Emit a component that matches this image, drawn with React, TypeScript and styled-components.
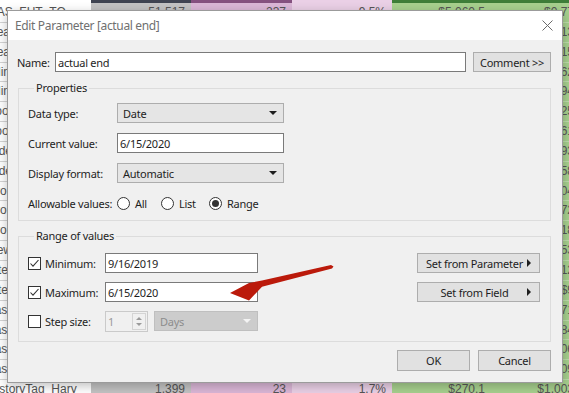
import React from "react";
import styled, { createGlobalStyle } from "styled-components";

const GlobalStyle = createGlobalStyle`
  html, body {
    margin: 0;
    padding: 0;
  }
  body {
    width: 569px;
    height: 393px;
    overflow: hidden;
    background: #ffffff;
  }
`;

const UI_FONT = `"Noto Sans", "Liberation Sans", sans-serif`;

type Tone = "plain" | "gray" | "pink" | "lightPink" | "green";

const toneBg: Record<Tone, string> = {
  plain: "#ffffff",
  gray: "#c3c3c3",
  pink: "#dbb7d7",
  lightPink: "#ead0e6",
  green: "#a7d08e",
};

const toneTop: Record<Tone, string> = {
  plain: "#ffffff",
  gray: "#3f4451",
  pink: "#85517f",
  lightPink: "#ead0e6",
  green: "#3e7d38",
};

const TONES: Tone[] = ["plain", "gray", "pink", "lightPink", "green", "green"];

const rows: string[][] = [
  ["NAS_FHT_TO", "51,517", "237", "9.5%", "$5,060.5", "$0.77"],
  ["Header_Ads", "2,114", "41", "1.9%", "$412.6", "$0.13"],
  ["Header_Lgo", "8,203", "66", "0.8%", "$1,230.2", "$2.15"],
  ["Inline_Ads", "3,011", "19", "0.6%", "$510.9", "$1.62"],
  ["Inline_Txt", "4,560", "88", "1.9%", "$733.0", "$0.94"],
  ["Footer_Ads", "1,902", "12", "0.6%", "$301.4", "$3.25"],
  ["Footer_Txt", "6,775", "105", "1.5%", "$820.8", "$0.61"],
  ["Side_Bnr_A", "2,840", "31", "1.1%", "$388.1", "$1.93"],
  ["Side_Bnr_B", "5,119", "47", "0.9%", "$640.7", "$0.58"],
  ["Promo_Tile", "3,390", "28", "0.8%", "$455.3", "$2.04"],
  ["Promo_Wide", "7,006", "90", "1.3%", "$902.5", "$0.72"],
  ["Promo_Tall", "1,244", "14", "1.1%", "$198.6", "$1.18"],
  ["Newsletter", "9,812", "130", "1.3%", "$1,402.0", "$0.53"],
  ["Inter_Ads", "2,506", "26", "1.0%", "$347.9", "$4.12"],
  ["Inter_Txt", "1,733", "18", "1.0%", "$260.4", "$9"],
  ["Last_List", "4,021", "52", "1.3%", "$598.2", "$0.71"],
  ["Last_Main", "3,655", "39", "1.1%", "$511.7", "$1.84"],
  ["Last_Side", "2,299", "21", "0.9%", "$344.0", "$0.06"],
  ["Last_Foot", "1,870", "17", "0.9%", "$289.3", "$3.09"],
  ["HistoryTag_Hary", "1,399", "23", "1.7%", "$270.1", "$1,003"],
];

// ---------- spreadsheet behind the dialog ----------

const Screen = styled.div`
  position: relative;
  width: 569px;
  height: 393px;
  overflow: hidden;
  background: #ffffff;
`;

const Sheet = styled.div`
  display: flex;
  flex-direction: column;
  width: 580px;
`;

const SheetRow = styled.div<{ $h: number }>`
  display: grid;
  grid-template-columns: 91px 100px 101px 100px 99px 89px;
  height: ${(p) => p.$h}px;
`;

const TopCell = styled.div<{ $tone: Tone }>`
  background: ${(p) => toneTop[p.$tone]};
`;

const Cell = styled.div<{ $tone: Tone }>`
  background: ${(p) => toneBg[p.$tone]};
  border-bottom: 1px solid
    ${(p) => (p.$tone === "plain" ? "#d4d4d4" : "rgba(255,255,255,0.25)")};
  box-sizing: border-box;
  font: 12px "Liberation Sans", Arial, sans-serif;
  color: #555555;
  line-height: 19px;
  white-space: nowrap;
  overflow: hidden;
  text-align: ${(p) => (p.$tone === "plain" ? "left" : "right")};
  text-indent: ${(p) => (p.$tone === "plain" ? "-12px" : "0")};
  padding: ${(p) => (p.$tone === "plain" ? "0" : "0 6px 0 0")};
`;

// ---------- dialog ----------

const Dialog = styled.div`
  position: absolute;
  left: 7px;
  top: 10px;
  width: 556px;
  height: 373px;
  box-sizing: border-box;
  display: flex;
  flex-direction: column;
  background: #f0f0f0;
  border: 1px solid #9b9b9b;
  box-shadow: 0 3px 10px rgba(0, 0, 0, 0.25);
  font-family: ${UI_FONT};
  font-size: 11px;
  letter-spacing: -0.25px;
  color: #1e1e1e;
`;

const TitleBar = styled.div`
  height: 29px;
  flex: none;
  display: flex;
  align-items: center;
  justify-content: space-between;
  background: #ffffff;
  padding: 0 9px 0 7px;
`;

const Title = styled.span`
  font-size: 12px;
  letter-spacing: -0.35px;
  color: #707070;
`;

const Body = styled.div`
  flex: 1;
  display: flex;
  flex-direction: column;
  padding: 12px 11px 0 8px;
`;

const NameRow = styled.div`
  display: flex;
  align-items: center;
  height: 20px;
`;

const NameLabel = styled.span`
  width: 38px;
  padding-left: 1px;
`;

const TextBox = styled.div<{ $w: number }>`
  width: ${(p) => p.$w}px;
  height: 20px;
  box-sizing: border-box;
  display: flex;
  align-items: center;
  padding-left: 2px;
  background: #ffffff;
  border: 1px solid #7a7a7a;
  white-space: nowrap;
`;

const Button = styled.button<{ $w: number; $h?: number }>`
  width: ${(p) => p.$w}px;
  height: ${(p) => p.$h ?? 20}px;
  box-sizing: border-box;
  display: flex;
  align-items: center;
  justify-content: center;
  padding: 0;
  background: #e1e1e1;
  border: 1px solid #adadad;
  border-radius: 0;
  font-family: ${UI_FONT};
  font-size: 11px;
  letter-spacing: -0.25px;
  color: #1e1e1e;
  white-space: nowrap;
`;

const Group = styled.fieldset<{ $top: number; $pad: string }>`
  margin: ${(p) => p.$top}px 0 0 2px;
  padding: ${(p) => p.$pad};
  border: 1px solid #dcdcdc;
  display: flex;
  flex-direction: column;
  gap: 10px;
  min-width: 0;
`;

const Legend = styled.legend`
  margin-left: 6px;
  padding: 0 2px;
  line-height: 16px;
`;

const FormRow = styled.div<{ $shift?: number }>`
  display: flex;
  align-items: center;
  height: 20px;
  margin-top: ${(p) => p.$shift ?? 0}px;
`;

const FieldLabel = styled.span<{ $w: number }>`
  width: ${(p) => p.$w}px;
  flex: none;
  white-space: nowrap;
`;

const Select = styled.div<{ $w: number; $disabled?: boolean }>`
  width: ${(p) => p.$w}px;
  height: 20px;
  box-sizing: border-box;
  display: flex;
  align-items: center;
  justify-content: space-between;
  padding: 0 6px 0 5px;
  background: ${(p) => (p.$disabled ? "#cccccc" : "#e5e5e5")};
  border: 1px solid ${(p) => (p.$disabled ? "#bfbfbf" : "#adadad")};
  color: ${(p) => (p.$disabled ? "#8d8d8d" : "#1e1e1e")};
`;

const DownArrow = styled.span<{ $color: string }>`
  width: 0;
  height: 0;
  border-left: 4px solid transparent;
  border-right: 4px solid transparent;
  border-top: 4px solid ${(p) => p.$color};
`;

const RightArrow = styled.span`
  width: 0;
  height: 0;
  flex: none;
  border-top: 4px solid transparent;
  border-bottom: 4px solid transparent;
  border-left: 4px solid #1e1e1e;
`;

const RadioOption = styled.label<{ $w?: number }>`
  display: flex;
  align-items: center;
  gap: 5px;
  width: ${(p) => (p.$w ? `${p.$w}px` : "auto")};
  flex: none;
`;

const RadioCircle = styled.span<{ $on?: boolean }>`
  width: 13px;
  height: 13px;
  box-sizing: border-box;
  border-radius: 50%;
  border: 1px solid #333333;
  background: #ffffff;
  display: flex;
  align-items: center;
  justify-content: center;
  &::after {
    content: "";
    display: ${(p) => (p.$on ? "block" : "none")};
    width: 7px;
    height: 7px;
    border-radius: 50%;
    background: #333333;
  }
`;

const CheckBox = styled.span`
  width: 13px;
  height: 13px;
  box-sizing: border-box;
  flex: none;
  border: 1px solid #333333;
  background: #ffffff;
  margin-right: 4px;
  display: flex;
`;

const SideButton = styled(Button)`
  margin-left: auto;
  padding: 0 8px 0 4px;
  justify-content: space-between;
`;

const SideText = styled.span`
  flex: 1;
  text-align: center;
`;

const Spinner = styled.div`
  width: 43px;
  height: 21px;
  box-sizing: border-box;
  display: flex;
  align-items: center;
  margin-right: 6px;
  border: 1px solid #cacaca;
  background: #f0f0f0;
  color: #9a9a9a;
`;

const SpinValue = styled.span`
  flex: 1;
  padding-left: 2px;
`;

const SpinArrows = styled.span`
  width: 14px;
  height: 17px;
  margin-right: 1px;
  box-sizing: border-box;
  border: 1px solid #d4d4d4;
  display: flex;
  flex-direction: column;
  align-items: center;
  justify-content: space-evenly;
`;

const SpinTri = styled.span<{ $up?: boolean }>`
  width: 0;
  height: 0;
  border-left: 3px solid transparent;
  border-right: 3px solid transparent;
  ${(p) =>
    p.$up ? "border-bottom: 3px solid #9a9a9a;" : "border-top: 3px solid #9a9a9a;"}
`;

const Footer = styled.div`
  display: flex;
  justify-content: flex-end;
  gap: 8px;
  margin-top: 8px;
`;

const Overlay = styled.svg`
  position: absolute;
  left: 0;
  top: 0;
  pointer-events: none;
`;

const Check = () => (
  <svg width="11" height="11" viewBox="0 0 11 11">
    <polyline points="1.5,5.5 4,8.2 9.5,2" fill="none" stroke="#333" strokeWidth="1.1" />
  </svg>
);

const CloseIcon = () => (
  <svg width="11" height="11" viewBox="0 0 11 11">
    <path d="M0.5 0.5 L10.5 10.5 M10.5 0.5 L0.5 10.5" stroke="#6a6a6a" strokeWidth="1" />
  </svg>
);

const App = () => {
  return (
    <Screen>
      <GlobalStyle />
      <Sheet>
        <SheetRow $h={3}>
          {TONES.map((t, i) => (
            <TopCell key={i} $tone={t} />
          ))}
        </SheetRow>
        {rows.map((r, ri) => (
          <SheetRow key={ri} $h={19.85}>
            {r.map((v, ci) => (
              <Cell key={ci} $tone={TONES[ci]}>
                {v}
              </Cell>
            ))}
          </SheetRow>
        ))}
      </Sheet>

      <Dialog>
        <TitleBar>
          <Title>Edit Parameter [actual end]</Title>
          <CloseIcon />
        </TitleBar>
        <Body>
          <NameRow>
            <NameLabel>Name:</NameLabel>
            <TextBox $w={411}>actual end</TextBox>
            <Button $w={78} style={{ marginLeft: 7 }}>
              Comment &gt;&gt;
            </Button>
          </NameRow>

          <Group $top={8} $pad="7px 10px 7px 9px">
            <Legend>Properties</Legend>
            <FormRow>
              <FieldLabel $w={89}>Data type:</FieldLabel>
              <Select $w={167}>
                Date
                <DownArrow $color="#1e1e1e" />
              </Select>
            </FormRow>
            <FormRow>
              <FieldLabel $w={89}>Current value:</FieldLabel>
              <TextBox $w={167}>6/15/2020</TextBox>
            </FormRow>
            <FormRow>
              <FieldLabel $w={89}>Display format:</FieldLabel>
              <Select $w={167}>
                Automatic
                <DownArrow $color="#1e1e1e" />
              </Select>
            </FormRow>
            <FormRow>
              <FieldLabel $w={89}>Allowable values:</FieldLabel>
              <RadioOption $w={44}>
                <RadioCircle />
                All
              </RadioOption>
              <RadioOption $w={48}>
                <RadioCircle />
                List
              </RadioOption>
              <RadioOption>
                <RadioCircle $on />
                Range
              </RadioOption>
            </FormRow>
          </Group>

          <Group $top={7} $pad="9px 10px 10px 9px">
            <Legend>Range of values</Legend>
            <FormRow>
              <CheckBox>
                <Check />
              </CheckBox>
              <FieldLabel $w={60}>Minimum:</FieldLabel>
              <TextBox $w={153}>9/16/2019</TextBox>
              <SideButton $w={123}>
                <SideText>Set from Parameter</SideText>
                <RightArrow />
              </SideButton>
            </FormRow>
            <FormRow $shift={-1}>
              <CheckBox>
                <Check />
              </CheckBox>
              <FieldLabel $w={60}>Maximum:</FieldLabel>
              <TextBox $w={153}>6/15/2020</TextBox>
              <SideButton $w={123}>
                <SideText>Set from Field</SideText>
                <RightArrow />
              </SideButton>
            </FormRow>
            <FormRow $shift={-1}>
              <CheckBox />
              <FieldLabel $w={60}>Step size:</FieldLabel>
              <Spinner>
                <SpinValue>1</SpinValue>
                <SpinArrows>
                  <SpinTri $up />
                  <SpinTri />
                </SpinArrows>
              </Spinner>
              <Select $w={104} $disabled>
                Days
                <DownArrow $color="#f4f4f4" />
              </Select>
            </FormRow>
          </Group>

          <Footer>
            <Button $w={73} $h={21}>
              OK
            </Button>
            <Button $w={73} $h={21}>
              Cancel
            </Button>
          </Footer>
        </Body>
      </Dialog>

      <Overlay width="569" height="393" viewBox="0 0 569 393">
        <polygon
          points="230,293 249,283 262,280.5 331,265 333.5,266.6 332,268.6 262,286.8 249,300.5"
          fill="#bb1a0b"
        />
      </Overlay>
    </Screen>
  );
};

export default App;
